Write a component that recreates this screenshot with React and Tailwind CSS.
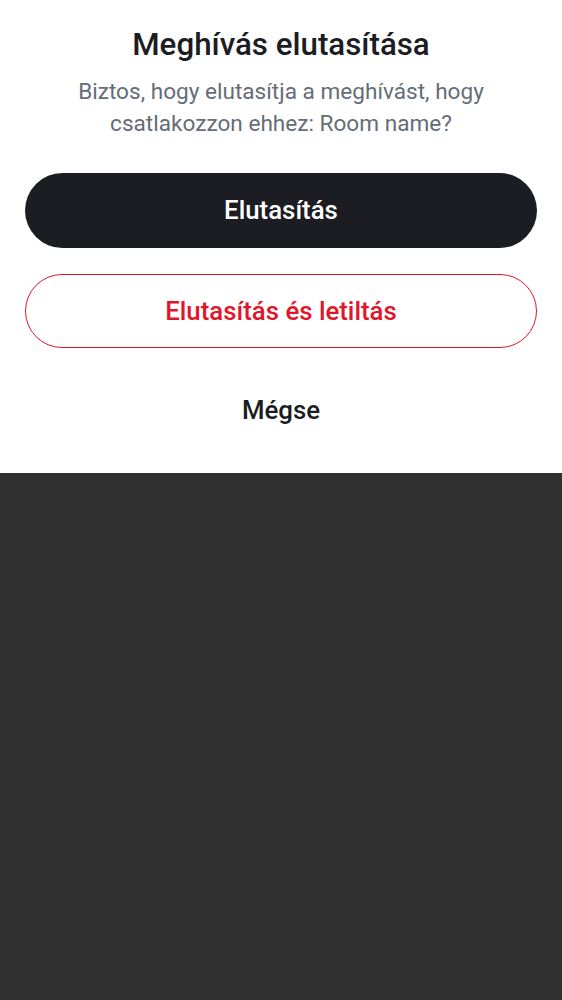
import React from 'react';

const App = () => {
  return (
    <div className="min-h-screen bg-[#303030]" style={{ fontFamily: 'Roboto, sans-serif' }}>
      {/* Bottom sheet */}
      <div className="bg-white h-[473px] px-[25px] pt-[26px] flex flex-col items-center">
        <h1 className="text-[31.3px] leading-[38px] font-medium text-[#1b1d22] text-center">
          Meghívás elutasítása
        </h1>
        <p className="mt-[12px] text-[22.6px] leading-[32px] text-[#656d77] text-center px-[30px]">
          Biztos, hogy elutasítja a meghívást, hogy csatlakozzon ehhez: Room name?
        </p>
        <button className="mt-[33px] w-full h-[75px] rounded-full bg-[#1b1d22] text-white text-[25.8px] font-medium">
          Elutasítás
        </button>
        <button className="mt-[26px] w-full h-[74px] rounded-full border border-[#e0162b] text-[#e0162b] text-[25.8px] font-medium">
          Elutasítás és letiltás
        </button>
        <button className="mt-[25px] w-full h-[75px] text-[#1b1d22] text-[25.8px] font-medium">
          Mégse
        </button>
      </div>
    </div>
  );
};

export default App;
